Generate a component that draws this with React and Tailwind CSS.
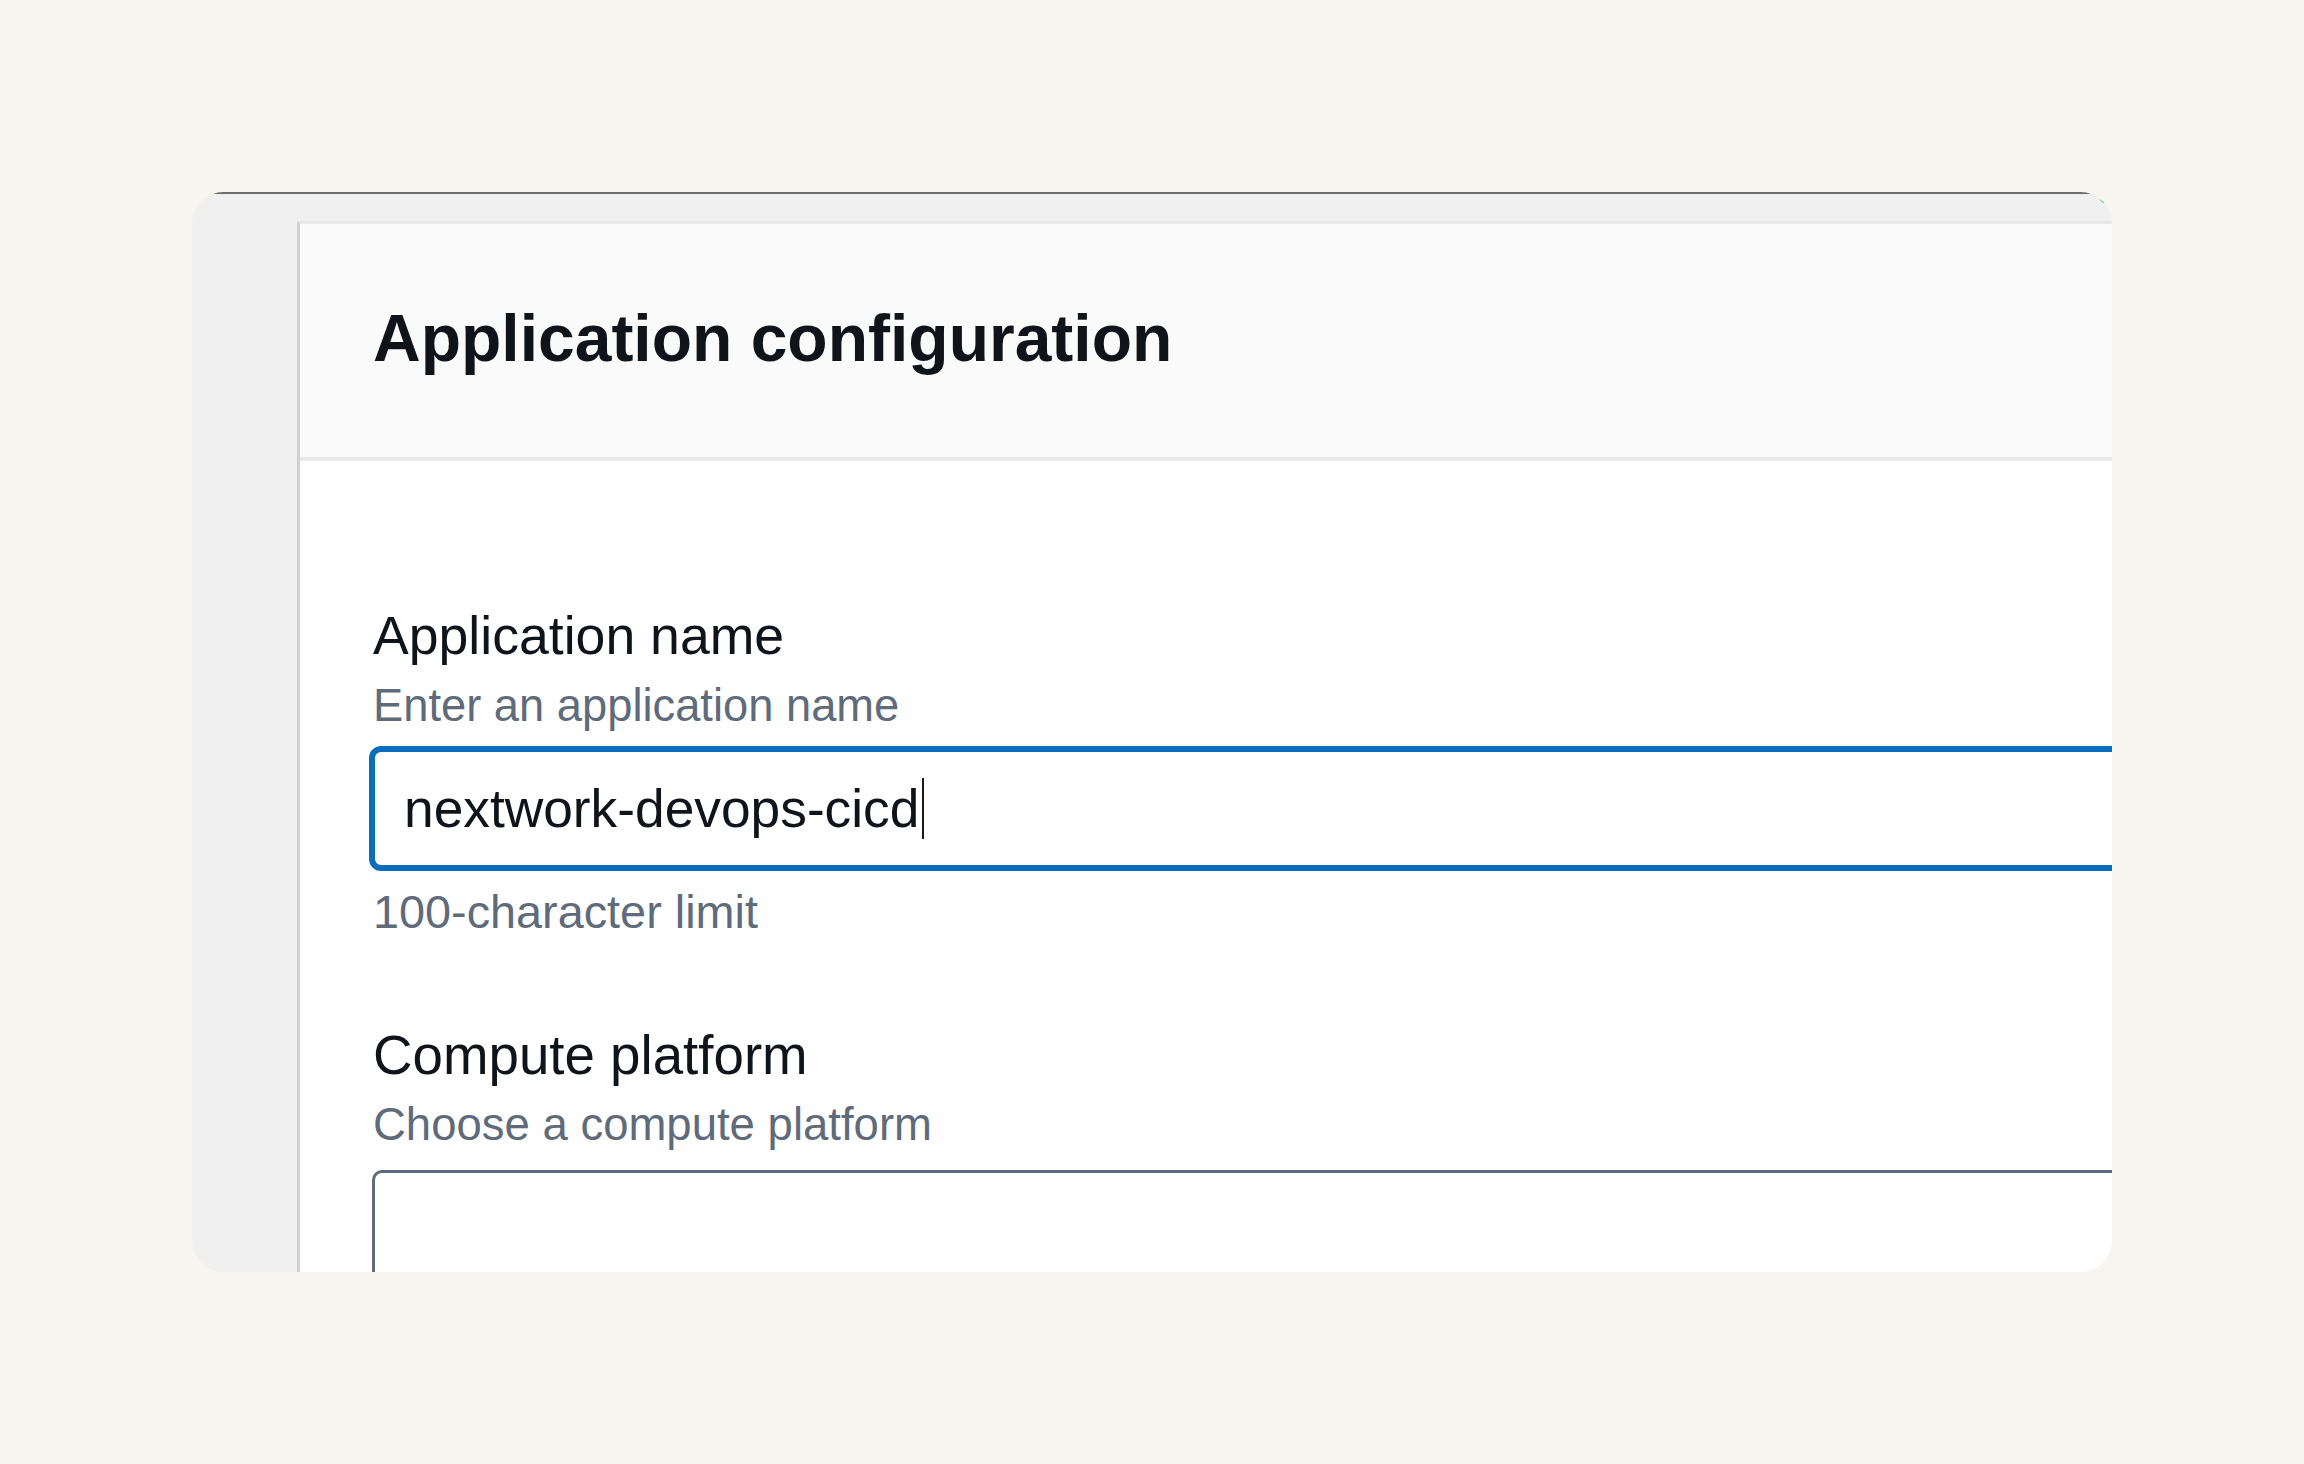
import React from 'react'

// Cropped AWS-style "Application configuration" form shown inside a framed screenshot
export default function App() {
  return (
    <div className="min-h-screen w-full bg-[#f8f5f0] flex justify-center pt-[192px] font-['Liberation_Sans',Arial,sans-serif]">
      <div className="relative w-[1920px] h-[1080px] rounded-[32px] overflow-hidden bg-[#f0f0f0] flex flex-col">
        {/* top edge line of the captured window */}
        <div className="h-[2px] bg-[#6a6a6a] shrink-0" />
        <div className="absolute top-[7px] right-[7px] w-[5px] h-[3px] bg-[#3fdc5a] rotate-45" />

        <div className="flex flex-1 min-h-0 pt-[27px] pl-[105px]">
          <div className="flex-1 flex flex-col bg-[#fefefe] border-l-[3px] border-l-[#cdd1d1] border-t-[3px] border-t-[#e8e8e8]">
            {/* Header */}
            <div className="h-[237px] shrink-0 bg-[#fafafa] border-b-4 border-b-[#e9e9e9] pl-[73px] pt-[74px]">
              <h2 className="text-[66px] leading-[80px] font-bold text-[#0f141a]">
                Application configuration
              </h2>
            </div>

            {/* Body */}
            <div className="flex flex-col items-start pl-[73px] pt-[142px]">
              <label className="text-[53.6px] leading-[64px] text-[#0f141a]">Application name</label>
              <p className="mt-[11px] text-[45.3px] leading-[56px] text-[#5f6b7a]">Enter an application name</p>

              <div className="mt-[12px] -ml-[4px] w-[1800px] h-[125px] box-border border-[6px] border-[#0a6ebd] rounded-[12px] bg-white flex items-center pl-[29px]">
                <span className="text-[53.3px] leading-[60px] text-[#0f141a]">nextwork-devops-cicd</span>
                <span className="ml-[3px] w-[2px] h-[61px] bg-[#1a1a1a]" />
              </div>

              <p className="mt-[13px] text-[46.8px] leading-[56px] text-[#5f6b7a]">100-character limit</p>

              <label className="mt-[83px] text-[54.7px] leading-[64px] text-[#0f141a]">Compute platform</label>
              <p className="mt-[10px] text-[45.5px] leading-[56px] text-[#5f6b7a]">Choose a compute platform</p>

              <div className="mt-[17px] -ml-[1px] w-[1800px] h-[200px] box-border border-[3px] border-[#5f6b7a] rounded-[10px] bg-white" />
            </div>
          </div>
        </div>
      </div>
    </div>
  )
}
